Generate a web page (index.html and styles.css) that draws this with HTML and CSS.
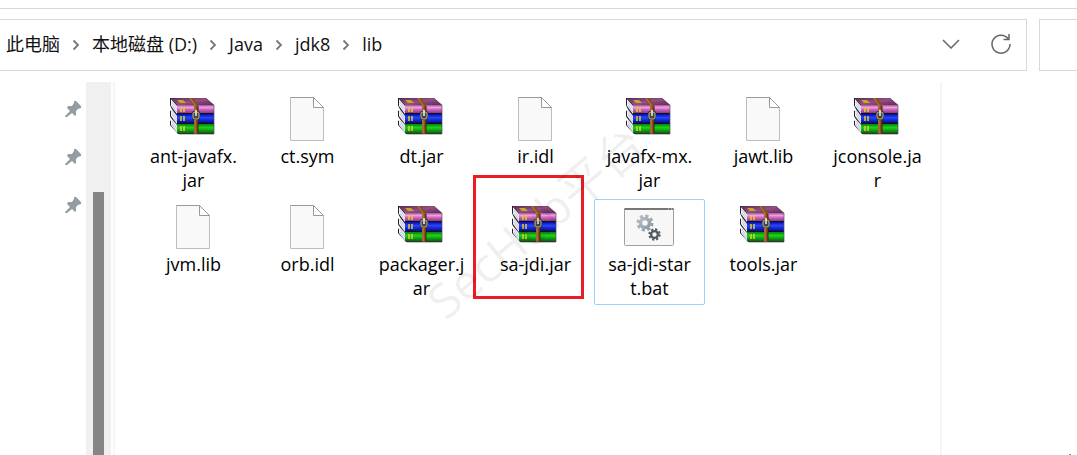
FILE: index.html
```html
<!DOCTYPE html>
<html lang="zh-CN">
<head>
  <meta charset="UTF-8">
  <meta name="viewport" content="width=device-width, initial-scale=1.0">
  <title>lib</title>
  <link rel="stylesheet" href="styles.css">
</head>
<body>
  <svg class="symbols" aria-hidden="true">
    <defs>
      <linearGradient id="pink" x1="0" y1="0" x2="0" y2="1">
        <stop offset="0" stop-color="#a8509a"/>
        <stop offset="0.3" stop-color="#f0a0e4"/>
        <stop offset="0.6" stop-color="#c860b8"/>
        <stop offset="1" stop-color="#8a3c80"/>
      </linearGradient>
      <linearGradient id="blue" x1="0" y1="0" x2="0" y2="1">
        <stop offset="0" stop-color="#0010a0"/>
        <stop offset="0.4" stop-color="#2844ff"/>
        <stop offset="1" stop-color="#000c88"/>
      </linearGradient>
      <linearGradient id="green" x1="0" y1="0" x2="0" y2="1">
        <stop offset="0" stop-color="#088008"/>
        <stop offset="0.4" stop-color="#1cd41c"/>
        <stop offset="1" stop-color="#056805"/>
      </linearGradient>
      <linearGradient id="cover" x1="0" y1="0" x2="1" y2="1">
        <stop offset="0" stop-color="#5a2c50"/>
        <stop offset="0.5" stop-color="#935084"/>
        <stop offset="1" stop-color="#5a2c50"/>
      </linearGradient>
      <linearGradient id="gear" x1="0" y1="0" x2="1" y2="1">
        <stop offset="0" stop-color="#b4bec6"/>
        <stop offset="1" stop-color="#8e9aa3"/>
      </linearGradient>
    </defs>

    <!-- stack of three books with a belt -->
    <symbol id="icon-jar" viewBox="0 0 51 48">
      <path d="M2 4h36l8 7v29H10L2 31v-4l2-1-2-4v-5l2-1-2-5z" fill="#252028"/>
      <path d="M3 5l6 7v8l-6-8zM3 14l6 8v8l-6-8zM3 24l6 7v8l-6-8z" fill="#f2f2fa"/>
      <path d="M4 8l5 7M4 11l5 7M4 17l5 8M4 20l5 8M4 27l5 8M4 30l5 8" stroke="#a8a8c4" stroke-width="0.6"/>
      <path d="M3 4h35l8 7H9z" fill="url(#cover)"/>
      <path d="M9 11h37v8H9z" fill="url(#pink)"/>
      <path d="M9 20h37v9H9z" fill="url(#blue)"/>
      <path d="M9 30h37v9H9z" fill="url(#green)"/>
      <path d="M9 19.500h37M9 29.500h37" stroke="#140c20"/>
      <path d="M9 6h6l3 3h-6z" fill="#c8a52a"/>
      <path d="M13 13v5M16 13v5M13 22v5M16 22v5M13 32v5M16 32v5" stroke="#e5cf30" stroke-width="1.500"/>
      <path d="M21 4h4l5 7v29h-4V12z" fill="#87501e"/>
      <path d="M22 4l5 7v28" fill="none" stroke="#c18440"/>
      <path d="M30 12v28" stroke="#3b200c"/>
      <rect x="24" y="17" width="8" height="9" rx="2" fill="#35302c"/>
      <rect x="25" y="18" width="6" height="7" rx="2" fill="#48443e" stroke="#b4b4a8"/>
      <path d="M28 16v6" stroke="#f4f4ea" stroke-width="1.500"/>
      <path d="M46 11v29H11" fill="none" stroke="#55505a" stroke-width="0.700"/>
    </symbol>

    <symbol id="icon-file" viewBox="0 0 51 48">
      <path d="M8.500 3.500h23l10 10v33h-33z" fill="#f9f9f9" stroke="#bdbdbd"/>
      <path d="M31.500 3.500v10h10z" fill="#fff" stroke="#999"/>
      <path d="M8.500 3.500h23" stroke="#999"/>
    </symbol>

    <symbol id="icon-bat" viewBox="0 0 51 48">
      <rect x="0.500" y="6.500" width="49" height="37" rx="1" fill="#f7f7f7" stroke="#a0a0a0"/>
      <path d="M0.500 7h49" stroke="#767676" stroke-width="2"/>
      <path d="M44 7h1M47 7h1" stroke="#ddd"/>
      <g fill="none" stroke="url(#gear)">
        <circle cx="21" cy="21" r="4.500" stroke-width="3.500"/>
        <circle cx="21" cy="21" r="7" stroke-width="3" stroke-dasharray="3.200 2.300"/>
      </g>
      <g fill="none" stroke="#505a60">
        <circle cx="30.500" cy="32.500" r="3.400" stroke-width="2.400"/>
        <circle cx="30.500" cy="32.500" r="5.200" stroke-width="2" stroke-dasharray="2.200 1.884"/>
      </g>
    </symbol>

    <symbol id="icon-pin" viewBox="0 0 16 16">
      <path d="M9 0l2 0 5 5v2l-3 1-2 2v4l-1 1-3-3-5 4H0v-1l5-5-3-3 1-2h4l2-3z" fill="#929da4"/>
    </symbol>

    <symbol id="icon-chevron" viewBox="0 0 8 12">
      <path d="M1.500 1.500L6 6l-4.500 4.500" fill="none" stroke="#777" stroke-width="1.800"/>
    </symbol>
  </svg>

  <header class="toolbar">
    <div class="address">
      <nav aria-label="路径">
        <ol class="crumbs">
          <li><a href="#">此电脑</a></li>
          <li><svg class="sep"><use href="#icon-chevron"/></svg><a href="#">本地磁盘 (D:)</a></li>
          <li><svg class="sep"><use href="#icon-chevron"/></svg><a href="#">Java</a></li>
          <li><svg class="sep"><use href="#icon-chevron"/></svg><a href="#">jdk8</a></li>
          <li><svg class="sep"><use href="#icon-chevron"/></svg><a href="#">lib</a></li>
        </ol>
      </nav>
      <div class="actions">
        <button class="tool" type="button" aria-label="展开">
          <svg width="18" height="10" viewBox="0 0 18 10"><path d="M1 1l8 8 8-8" fill="none" stroke="#666" stroke-width="1.500"/></svg>
        </button>
        <button class="tool" type="button" aria-label="刷新">
          <svg width="22" height="22" viewBox="0 0 22 22"><path d="M18 5.500A9 9 0 1 0 20 11M19 1v5.500h-5.500" fill="none" stroke="#666" stroke-width="1.500"/></svg>
        </button>
      </div>
    </div>
    <input class="search" type="search" aria-label="搜索">
  </header>

  <main class="window">
    <aside class="sidebar">
      <svg class="pin"><use href="#icon-pin"/></svg>
      <svg class="pin"><use href="#icon-pin"/></svg>
      <svg class="pin"><use href="#icon-pin"/></svg>
    </aside>
    <div class="scrollbar"><div class="thumb"></div></div>

    <section class="files">
      <div class="file"><svg class="icon"><use href="#icon-jar"/></svg><span>ant-javafx.<br>jar</span></div>
      <div class="file"><svg class="icon"><use href="#icon-file"/></svg><span>ct.sym</span></div>
      <div class="file"><svg class="icon"><use href="#icon-jar"/></svg><span>dt.jar</span></div>
      <div class="file"><svg class="icon"><use href="#icon-file"/></svg><span>ir.idl</span></div>
      <div class="file"><svg class="icon"><use href="#icon-jar"/></svg><span>javafx-mx.<br>jar</span></div>
      <div class="file"><svg class="icon"><use href="#icon-file"/></svg><span>jawt.lib</span></div>
      <div class="file"><svg class="icon"><use href="#icon-jar"/></svg><span>jconsole.ja<br>r</span></div>
      <div class="file"><svg class="icon"><use href="#icon-file"/></svg><span>jvm.lib</span></div>
      <div class="file"><svg class="icon"><use href="#icon-file"/></svg><span>orb.idl</span></div>
      <div class="file"><svg class="icon"><use href="#icon-jar"/></svg><span>packager.j<br>ar</span></div>
      <div class="file marked"><svg class="icon"><use href="#icon-jar"/></svg><span>sa-jdi.jar</span></div>
      <div class="file selected"><svg class="icon"><use href="#icon-bat"/></svg><span>sa-jdi-star<br>t.bat</span></div>
      <div class="file"><svg class="icon"><use href="#icon-jar"/></svg><span>tools.jar</span></div>
      <div class="watermark">SecHub平台</div>
    </section>
    <div class="preview"></div>
  </main>
</body>
</html>
```
FILE: styles.css
```css
* {
  box-sizing: border-box;
}

body {
  margin: 0;
  min-height: 100vh;
  display: flex;
  flex-direction: column;
  background: #fff;
  color: #000;
  font-family: "Open Sans", "Noto Sans CJK SC", sans-serif;
  font-size: 18px;
  line-height: 24px;
  overflow: hidden;
}

.symbols {
  position: absolute;
  width: 0;
  height: 0;
}

/* address bar */
.toolbar {
  display: flex;
  gap: 12px;
  margin-top: 8px;
  padding-top: 10px;
  border-top: 1px solid #d9d9d9;
}

.address {
  flex: 1;
  display: flex;
  align-items: center;
  justify-content: space-between;
  height: 52px;
  padding: 0 11px 2px 6px;
  border: 1px solid #d9d9d9;
  border-left: none;
}

.crumbs {
  display: flex;
  margin: 0;
  padding: 0;
  list-style: none;
}

.crumbs li {
  display: flex;
  align-items: center;
}

.crumbs a {
  color: #111;
  text-decoration: none;
}

.sep {
  width: 8px;
  height: 12px;
  margin: 2px 12px 0;
}

.actions {
  display: flex;
  gap: 22px;
}

.tool {
  display: flex;
  align-items: center;
  justify-content: center;
  width: 28px;
  height: 28px;
  padding: 0;
  border: none;
  background: none;
}

.search {
  width: 38px;
  height: 52px;
  padding: 0;
  border: 1px solid #d9d9d9;
  border-right: none;
  border-radius: 0;
  background: #fff;
}

/* panes */
.window {
  position: relative;
  flex: 1;
  display: flex;
  margin-top: 11px;
}

.window::after {
  content: "";
  position: absolute;
  right: 6px;
  bottom: 0;
  width: 2px;
  height: 1px;
  background: #4a9fe0;
}

.sidebar {
  width: 86px;
  display: flex;
  flex-direction: column;
  align-items: flex-end;
  gap: 32px;
  padding: 19px 5px 0 0;
}

.pin {
  width: 16px;
  height: 16px;
}

.scrollbar {
  display: flex;
  width: 25px;
  margin-right: 2px;
  padding: 110px 7px 0;
  background: #f0f0f0;
}

.thumb {
  flex: 1;
  background: #858585;
}

.files {
  position: relative;
  flex: 1;
  display: grid;
  grid-template-columns: repeat(auto-fill, 111px);
  grid-auto-rows: 106px;
  align-content: start;
  gap: 2px 3px;
  padding: 9px 0 0 23px;
  border-left: 2px solid #f5f5f5;
  border-right: 2px solid #f5f5f5;
}

.preview {
  width: 135px;
}

.file {
  display: flex;
  flex-direction: column;
  align-items: center;
  padding-top: 2px;
  border: 1px solid transparent;
  border-radius: 2px;
  text-align: center;
}

.icon {
  width: 51px;
  height: 48px;
  margin-bottom: 2px;
}

.selected {
  border-color: #99d1ff;
}

.marked {
  position: relative;
}

/* red frame round the file */
.marked::after {
  content: "";
  position: absolute;
  inset: -25px 6px 5px -8px;
  border: 3px solid #ed1c24;
}

.watermark {
  position: absolute;
  left: 288px;
  top: 112px;
  color: rgba(0, 0, 0, 0.07);
  font-size: 48px;
  line-height: 56px;
  white-space: nowrap;
  transform: rotate(-40deg);
  pointer-events: none;
}
```
